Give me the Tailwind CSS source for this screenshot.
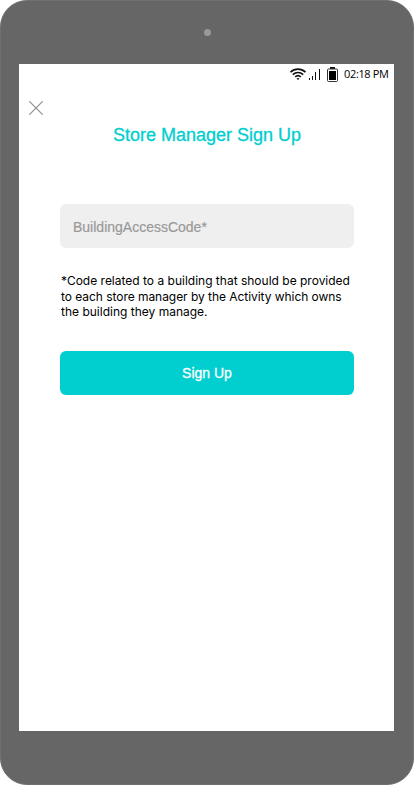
<!DOCTYPE html>
<html lang="en">
<head>
<meta charset="utf-8">
<title>Store Manager Sign Up</title>
<script src="https://cdn.jsdelivr.net/npm/@tailwindcss/browser@4"></script>
</head>
<body class="bg-white font-['Liberation_Sans',Arial,sans-serif]">
<div class="flex h-[785px] w-[414px] flex-col items-center overflow-hidden rounded-[27px] border border-[#707070] bg-[#666666]">
  <div class="flex h-[63px] w-full justify-center pt-[27.5px]"><span class="size-[7px] rounded-full bg-[#999999]"></span></div>
  <main class="mr-px flex h-[667px] w-[375px] flex-col bg-white">
    <div class="flex h-[20px] items-center justify-end pr-[5px]">
      <svg class="mr-[3px] h-[12px] w-[16px]" viewBox="0 0 16 12" fill="none" stroke="#111" stroke-width="1.6"><path d="M.5 4.2C4.7.1 11.3.1 15.5 4.2M2.8 6.6c3-2.8 7.4-2.8 10.4 0M5.2 8.9c1.6-1.5 4-1.5 5.6 0"/><path d="M6.5 10.4q1.5-1 3 0L8 11.9z" fill="#111" stroke="none"/></svg>
      <svg class="mr-[7px] h-[12px] w-[11px]" viewBox="0 0 11 12" fill="#111"><path d="M0 10h1v2H0zM3 8h1v4H3zM6 4h1v8H6zM10 1h1v11h-1z"/></svg>
      <svg class="mr-[6px] h-[15px] w-[11px]" viewBox="0 0 11 15"><path d="M3 0h5v2H3z" fill="#111"/><rect x=".5" y="2" width="10" height="12.5" rx="1" fill="white" stroke="#333"/><path d="M2 4h7v9H2z" fill="black"/></svg>
      <span class="w-[45px] whitespace-nowrap font-['Open_Sans',sans-serif] text-[11px] leading-5 tracking-[-0.35px] text-black">02:18 PM</span>
    </div>
    <button aria-label="Close" class="mt-[17px] ml-[10px] size-[14px]"><svg class="size-[14px]" viewBox="0 0 14 14" fill="none" stroke="#8f8f8f" stroke-width="1.2"><path d="M.3.3l13.4 13.4M13.7.3L.3 13.7"/></svg></button>
    <h1 class="mt-[8px] h-6 pl-px text-center text-[18px] leading-6 text-[#00cecf] [-webkit-text-stroke:0.3px_#00cecf]">Store Manager Sign Up</h1>
    <form class="mr-[40px] ml-[41px] mt-[57px] flex flex-col">
      <div class="flex h-[44px] items-center rounded-md bg-[#efefef] pt-[3px] pl-[13px] text-[14px] text-[#999999] [-webkit-text-stroke:0.2px_#999999]">BuildingAccessCode*</div>
      <p class="mt-[25px] ml-px h-[47px] whitespace-nowrap font-['Inter',sans-serif] text-[12px] leading-[15.6px] text-black">*Code related to a building that should be provided<br><span class="tracking-[-0.045px]">to each store manager by the Activity which owns</span><br>the building they manage.</p>
      <button type="button" class="mt-[31px] h-[44px] rounded-md bg-[#00cecf] text-[14px] text-white [-webkit-text-stroke:0.3px_white]">Sign Up</button>
    </form>
  </main>
</div>
</body>
</html>
